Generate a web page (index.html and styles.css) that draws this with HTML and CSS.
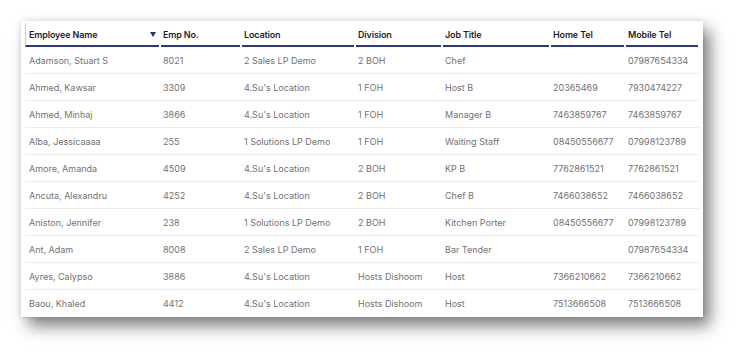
FILE: index.html
```html
<!DOCTYPE html>
<html>
<head>
  <meta charset="UTF-8">
  <title>Employees</title>
  <link rel="stylesheet" href="styles.css">
</head>
<body>
  <div class="card">
    <table class="grid">
      <colgroup>
        <col class="c-name">
        <col class="c-no">
        <col class="c-loc">
        <col class="c-div">
        <col class="c-job">
        <col class="c-home">
        <col class="c-mob">
      </colgroup>
      <thead>
        <tr>
          <th class="first"><div class="head">Employee Name <span class="sort"></span></div></th>
          <th><div class="head">Emp No.</div></th>
          <th><div class="head">Location</div></th>
          <th><div class="head">Division</div></th>
          <th><div class="head">Job Title</div></th>
          <th><div class="head">Home Tel</div></th>
          <th><div class="head">Mobile Tel</div></th>
        </tr>
      </thead>
      <tbody>
        <tr><td>Adamson, Stuart S</td><td>8021</td><td>2 Sales LP Demo</td><td>2 BOH</td><td>Chef</td><td></td><td>07987654334</td></tr>
        <tr><td>Ahmed, Kawsar</td><td>3309</td><td>4.Su's Location</td><td>1 FOH</td><td>Host B</td><td>20365469</td><td>7930474227</td></tr>
        <tr><td>Ahmed, Minhaj</td><td>3866</td><td>4.Su's Location</td><td>1 FOH</td><td>Manager B</td><td>7463859767</td><td>7463859767</td></tr>
        <tr><td>Alba, Jessicaaaa</td><td>255</td><td>1 Solutions LP Demo</td><td>1 FOH</td><td>Waiting Staff</td><td>08450556677</td><td>07998123789</td></tr>
        <tr><td>Amore, Amanda</td><td>4509</td><td>4.Su's Location</td><td>2 BOH</td><td>KP B</td><td>7762861521</td><td>7762861521</td></tr>
        <tr><td>Ancuta, Alexandru</td><td>4252</td><td>4.Su's Location</td><td>2 BOH</td><td>Chef B</td><td>7466038652</td><td>7466038652</td></tr>
        <tr><td>Aniston, Jennifer</td><td>238</td><td>1 Solutions LP Demo</td><td>2 BOH</td><td>Kitchen Porter</td><td>08450556677</td><td>07998123789</td></tr>
        <tr><td>Ant, Adam</td><td>8008</td><td>2 Sales LP Demo</td><td>1 FOH</td><td>Bar Tender</td><td></td><td>07987654334</td></tr>
        <tr><td>Ayres, Calypso</td><td>3886</td><td>4.Su's Location</td><td>Hosts Dishoom</td><td>Host</td><td>7366210662</td><td>7366210662</td></tr>
        <tr><td>Baou, Khaled</td><td>4412</td><td>4.Su's Location</td><td>Hosts Dishoom</td><td>Host</td><td>7513666508</td><td>7513666508</td></tr>
      </tbody>
    </table>
  </div>
</body>
</html>
```

FILE: styles.css
```css
html, body {
  height: 100%;
}

body {
  margin: 0;
  padding-top: 21px;
  box-sizing: border-box;
  background: #fff;
  font-family: Inter, 'Liberation Sans', sans-serif;
}

.card {
  width: 682px;
  height: 296px;
  margin-left: 21px;
  padding: 2px 4px 0 4px;
  box-sizing: border-box;
  background: #fff;
  box-shadow: 7px 9px 15px rgba(0, 0, 0, 0.5), 0 0 5px rgba(0, 0, 0, 0.12);
  overflow: hidden;
}

.grid {
  width: 674px;
  border-collapse: collapse;
  table-layout: fixed;
}

.c-name { width: 135px; }
.c-no { width: 81px; }
.c-loc { width: 114px; }
.c-div { width: 87px; }
.c-job { width: 108px; }
.c-home { width: 75px; }
.c-mob { width: 74px; }

.grid th {
  padding: 0;
  text-align: left;
  vertical-align: bottom;
}

.head {
  display: flex;
  align-items: center;
  justify-content: space-between;
  height: 22px;
  margin: 0 1px;
  padding: 0 2px;
  border-bottom: 2px solid #2b3a7a;
  font-size: 9px;
  font-weight: 600;
  letter-spacing: -0.15px;
  color: #1f1f1f;
  white-space: nowrap;
}

.first .head {
  margin-left: 0;
  padding-left: 3px;
  border-left: 1px solid #c9ccd6;
}

.sort {
  width: 0;
  height: 0;
  margin-right: 1px;
  border-left: 3px solid transparent;
  border-right: 3px solid transparent;
  border-top: 5px solid #24347a;
}

.grid td {
  height: 26px;
  padding: 0 3px;
  border-bottom: 1px solid #ececec;
  font-size: 9px;
  color: #727272;
  white-space: nowrap;
  overflow: hidden;
}

.grid td:first-child {
  padding-left: 4px;
}

.grid tbody tr:last-child td {
  border-bottom: none;
}
```
